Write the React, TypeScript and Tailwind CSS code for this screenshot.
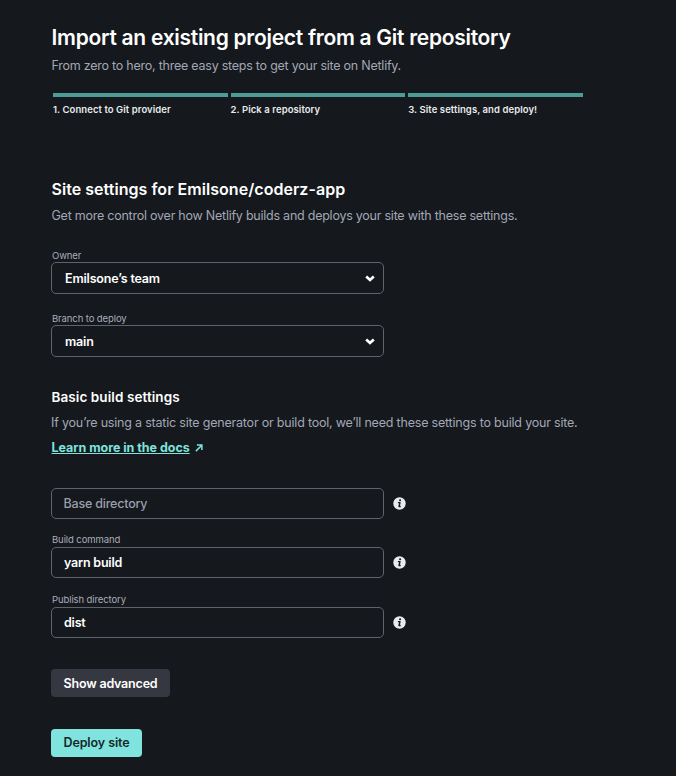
import React from "react";

const steps = ["1. Connect to Git provider", "2. Pick a repository", "3. Site settings, and deploy!"];

function InfoIcon() {
  return (
    <svg className="ml-[8.5px] size-[13px] shrink-0" viewBox="0 0 13 13" role="img" aria-label="More info">
      <circle cx="6.5" cy="6.5" r="6.2" fill="#e9ebed" />
      <circle cx="7.1" cy="3.3" r="1.05" fill="#15181d" />
      <path d="M4.9 5.6H7L6 9.5h1.7" fill="none" stroke="#15181d" strokeWidth="1.4" strokeLinejoin="round" />
    </svg>
  );
}

function Chevron() {
  return (
    <svg className="h-[7px] w-[10px]" viewBox="0 0 10 7" fill="none" aria-hidden="true">
      <path d="M1.2 1.5 5 5 8.8 1.5" stroke="#fff" strokeWidth="2.7" />
    </svg>
  );
}

function SelectField({ label, value }: { label: string; value: string }) {
  return (
    <div className="w-[333px]">
      <div className="h-[14px] pt-px pl-px text-[9.5px] leading-[14px] tracking-[-0.1px] text-[#a9adba]">{label}</div>
      <button className="flex h-8 w-full items-center justify-between rounded-[5px] border border-[#60636b] pr-2 pl-[13px] text-[12.5px] font-semibold tracking-[-0.18px] text-white">
        <span className="pt-[2px]">{value}</span>
        <Chevron />
      </button>
    </div>
  );
}

function TextField({ label, value, placeholder }: { label?: string; value?: string; placeholder?: string }) {
  return (
    <div>
      {label && <div className="h-[14px] pl-px text-[9.5px] leading-[14px] tracking-[-0.1px] text-[#a9adba]">{label}</div>}
      <div className="flex items-center">
        <input
          className="h-[31px] w-[333px] rounded-[5px] border border-[#60636b] bg-transparent px-3 text-[12.5px] font-semibold tracking-[-0.2px] text-white placeholder-shown:pl-[11.5px] placeholder:font-medium placeholder:text-[#9a9eab]"
          defaultValue={value}
          placeholder={placeholder}
          aria-label={label ?? placeholder}
        />
        <InfoIcon />
      </div>
    </div>
  );
}

export default function App() {
  return (
    <main className="h-[776px] w-[676px] overflow-hidden bg-[#15181d] pt-[23px] pl-[51px] font-['Inter','Liberation_Sans',sans-serif] whitespace-nowrap">
      <h1 className="h-[29px] pl-[0.5px] text-[21px] leading-[29px] font-semibold tracking-[-0.28px] text-white">Import an existing project from a Git repository</h1>
      <p className="mt-1 h-[19px] pl-[0.5px] text-[12.5px] leading-[19px] tracking-[-0.24px] text-[#a3a7b4]">From zero to hero, three easy steps to get your site on Netlify.</p>
      <ol className="mt-[18px] ml-[2px] flex gap-[3px]">
        {steps.map((s) => (
          <li key={s} className="w-[174.6px]">
            <div className="h-[3.5px] bg-[#4a9c94]" />
            <div className="h-[20.5px] pt-[6.4px] text-[9.5px] leading-[14px] font-semibold tracking-[0.08px] text-[#e9ebed]">{s}</div>
          </li>
        ))}
      </ol>

      <h2 className="mt-[61px] h-[22px] pl-[0.5px] text-[16px] leading-[22px] font-semibold tracking-[0.04px] text-white">Site settings for Emilsone/coderz-app</h2>
      <p className="mt-[6px] h-[19px] pl-[0.5px] text-[12.5px] leading-[19px] tracking-[-0.24px] text-[#a3a7b4]">Get more control over how Netlify builds and deploys your site with these settings.</p>

      <div className="mt-[23px] flex flex-col gap-[17px]">
        <SelectField label="Owner" value="Emilsone’s team" />
        <SelectField label="Branch to deploy" value="main" />
      </div>

      <h3 className="mt-[30px] h-[20px] pl-[0.5px] text-[13.5px] leading-[20px] font-semibold tracking-[0.08px] text-white">Basic build settings</h3>
      <p className="mt-[6px] h-[19px] text-[12.5px] leading-[19px] tracking-[-0.2px] text-[#a3a7b4]">If you’re using a static site generator or build tool, we’ll need these settings to build your site.</p>
      <a className="mt-[6px] flex h-[19px] items-center pl-[0.5px] text-[12.5px] leading-[19px] font-bold tracking-[-0.03px] text-[#7fe3dc]" href="#docs">
        <span className="underline">Learn more in the docs</span>
        <svg className="ml-[5px] size-[8px]" viewBox="0 0 8 8" fill="none" stroke="currentColor" strokeWidth="1.5" aria-hidden="true">
          <path d="M.9 7.1 6.8 1.2M1.9 1.1h5v4.9" />
        </svg>
      </a>

      <div className="mt-[31px] flex flex-col gap-[14.4px]">
        <TextField placeholder="Base directory" />
        <TextField label="Build command" value="yarn build" />
        <TextField label="Publish directory" value="dist" />
      </div>

      <button className="mt-[31.7px] block h-[28px] w-[119px] rounded-[4px] bg-[#353840] pt-px text-[12.5px] font-semibold tracking-[-0.2px] text-white">Show advanced</button>
      <button className="mt-[31.5px] block h-[28px] w-[91px] rounded-[4px] bg-[#80e3dd] pt-px text-[12.5px] font-semibold tracking-[-0.1px] text-[#15282c]">Deploy site</button>
    </main>
  );
}
